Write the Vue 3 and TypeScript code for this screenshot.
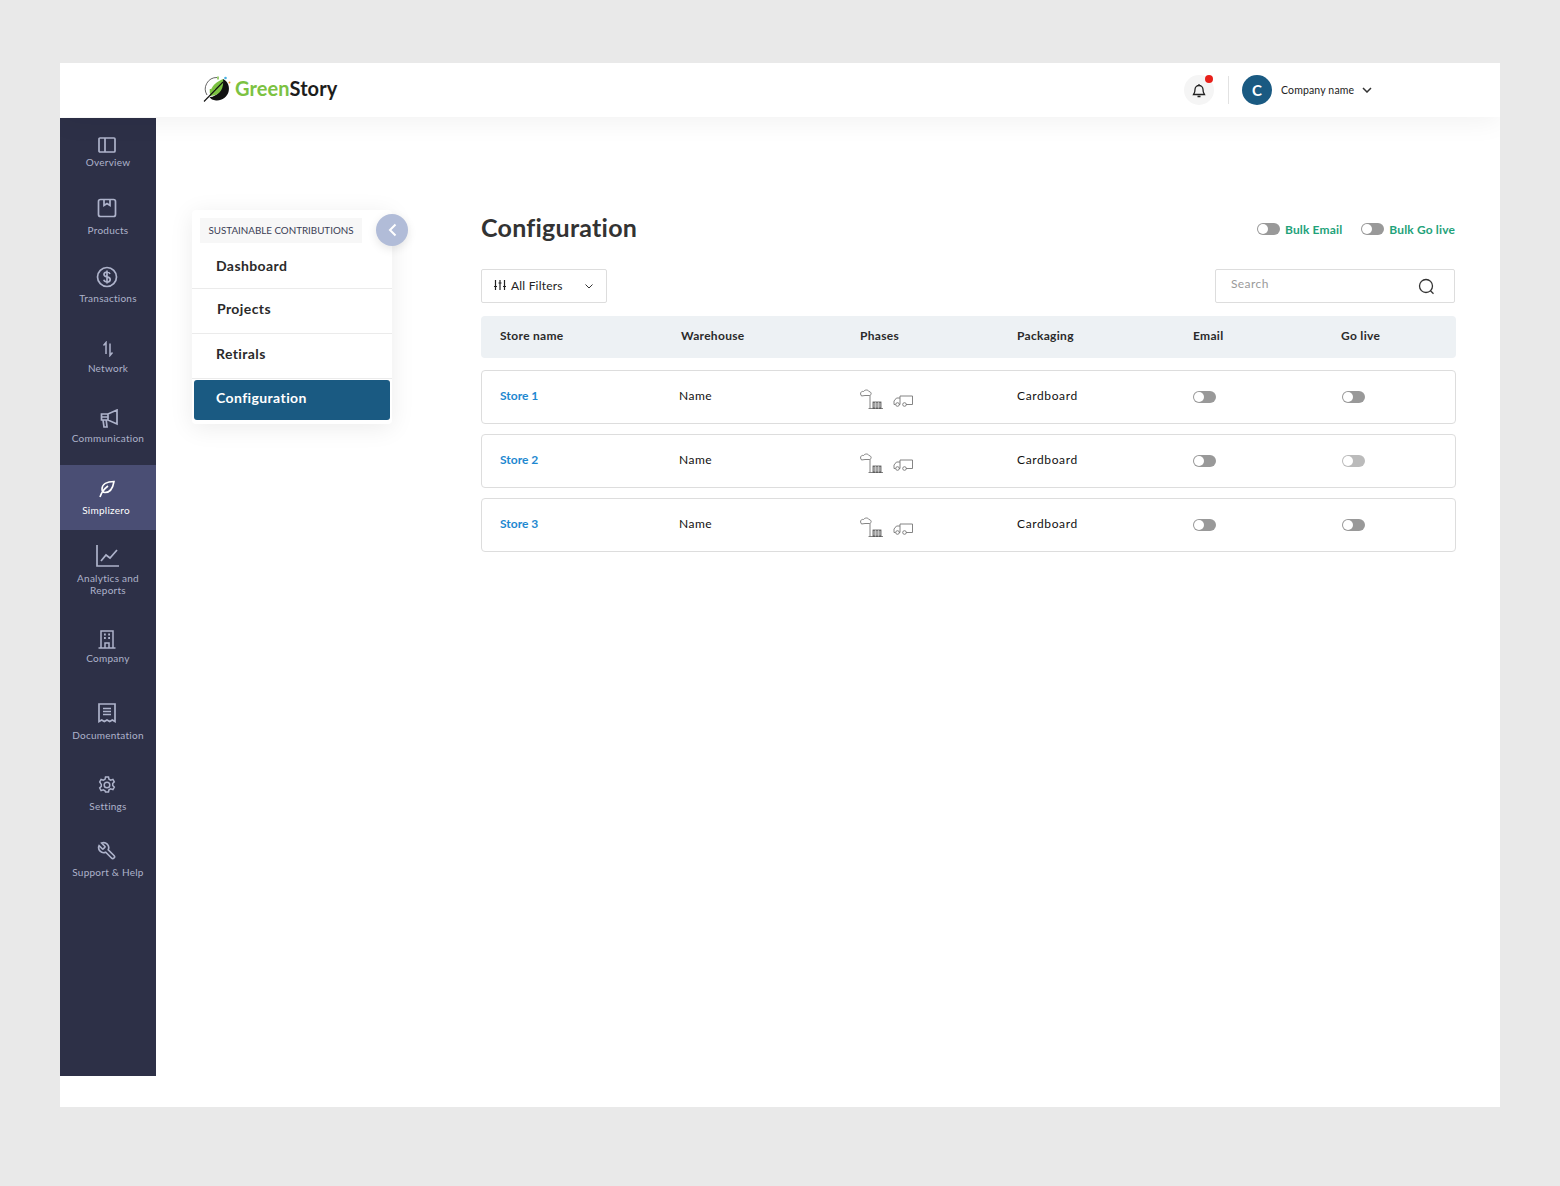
<script setup lang="ts">
interface NavItem { key: string; label: string[]; h: number; pt: number; gap: number; active?: boolean }
const nav: NavItem[] = [
  { key: 'overview', label: ['Overview'], h: 68, pt: 15, gap: 0 },
  { key: 'products', label: ['Products'], h: 68, pt: 10, gap: 4 },
  { key: 'transactions', label: ['Transactions'], h: 71, pt: 11, gap: 3 },
  { key: 'network', label: ['Network'], h: 71, pt: 12, gap: 1 },
  { key: 'communication', label: ['Communication'], h: 69, pt: 10, gap: 2 },
  { key: 'simplizero', label: ['Simplizero'], h: 65, pt: 12, gap: 3, active: true },
  { key: 'analytics', label: ['Analytics and', 'Reports'], h: 86, pt: 14, gap: 4 },
  { key: 'company', label: ['Company'], h: 74, pt: 11, gap: 1 },
  { key: 'documentation', label: ['Documentation'], h: 72, pt: 11, gap: 4 },
  { key: 'settings', label: ['Settings'], h: 67, pt: 11, gap: 3 },
  { key: 'support', label: ['Support & Help'], h: 60, pt: 10, gap: 3 },
]
const menu = ['Dashboard', 'Projects', 'Retirals']
const stores = [
  { name: 'Store 1', live: true },
  { name: 'Store 2', live: false },
  { name: 'Store 3', live: true },
]
</script>

<template>
  <div class="frame">
    <header class="topbar">
      <div class="brand">
        <svg width="28" height="28" viewBox="0 0 28 28" fill="none">
          <path d="M14 2.500A11.500 11.500 0 0 0 4 20" stroke="#666" stroke-width="1"/>
          <path d="M20 4c5 2 7 8 5.500 13-1.500 5-6.500 9-12.500 8.500-3-.3-5.500-1.500-6.500-3.500C15 22 19 14 20 4z" fill="#111"/>
          <path d="M7 21c-.5-6 3-13 13-17 1 8-2 17-13 17z" fill="#7cc242"/>
          <path d="M1 26.500 20 7" stroke="#111" stroke-width="1.100"/>
          <circle cx="22.500" cy="3" r="1.300" fill="#4ab2e3"/>
          <circle cx="26.500" cy="7.500" r="1" fill="#f29a2e"/>
          <path d="M7.500 14v4M11 11v4M15 1.500v3" stroke="#7cc242" stroke-width="1.500"/>
        </svg>
        <span class="brand-text"><span class="green">Green</span>Story</span>
      </div>
      <div class="account">
        <div class="bell">
          <svg width="14" height="15" viewBox="0 0 14 15" fill="none" stroke="#222" stroke-width="1.300">
            <path d="M3 6.500a4 4 0 0 1 8 0c0 3 .6 3.500 1.500 5h-11c.9-1.500 1.500-2 1.500-5zM5.500 13.500h3M7 1v1.500"/>
          </svg>
          <i class="dot"></i>
        </div>
        <div class="vr"></div>
        <div class="avatar">C</div>
        <span class="company">Company name</span>
        <svg width="10" height="6" viewBox="0 0 10 6" fill="none" stroke="#333" stroke-width="1.500"><path d="M1 1l4 4 4-4"/></svg>
      </div>
    </header>

    <div class="body">
      <nav class="sidebar">
        <a v-for="it in nav" :key="it.key" class="nav-item" :class="{ active: it.active }"
           :style="{ height: it.h + 'px', paddingTop: it.pt + 'px', gap: it.gap + 'px' }">
          <span class="nav-icon">
            <svg v-if="it.key === 'overview'" width="18" height="16" viewBox="0 0 18 16" fill="none" stroke="currentColor" stroke-width="1.700"><rect x="1" y="1" width="16" height="14" rx="1"/><path d="M7 1v14"/></svg>
            <svg v-else-if="it.key === 'products'" width="20" height="20" viewBox="0 0 20 20" fill="none" stroke="currentColor" stroke-width="1.700"><rect x="1.500" y="1.500" width="17" height="17" rx="2"/><path d="M7 1.500v6l3-2 3 2v-6"/></svg>
            <svg v-else-if="it.key === 'transactions'" width="22" height="22" viewBox="0 0 22 22" fill="none" stroke="currentColor" stroke-width="1.700"><circle cx="11" cy="11" r="9.500"/><path d="M14 8c-.5-1.300-1.600-2-3-2-1.800 0-3 1-3 2.400 0 3.300 6.200 1.700 6.200 5 0 1.500-1.300 2.600-3.200 2.600-1.500 0-2.700-.8-3.200-2.200M11 4.500v13"/></svg>
            <svg v-else-if="it.key === 'network'" class="shift-n" width="12" height="16" viewBox="0 0 12 16" fill="none" stroke="currentColor" stroke-width="1.500"><path d="M4 13V1.500L1.500 4.500M8 2.500V14.500l2.500-3"/></svg>
            <svg v-else-if="it.key === 'communication'" class="shift" width="18" height="19" viewBox="0 0 18 19" fill="none" stroke="currentColor" stroke-width="1.700"><path d="M17 1v14L8 11H1.500V5H8zM8 5v6M3 11 4 18h3l-.8-7M1.500 8H8"/></svg>
            <svg v-else-if="it.key === 'simplizero'" width="16" height="18" viewBox="0 0 16 18" fill="none" stroke="currentColor" stroke-width="1.600"><path d="M15 1.500C8 1.500 3 4 3 9c0 2 1 3.500 3 3.500 6 0 8-5 9-11zM1 17c1.500-5 4-8 8-11"/></svg>
            <svg v-else-if="it.key === 'analytics'" width="23" height="22" viewBox="0 0 23 22" fill="none" stroke="currentColor" stroke-width="1.700"><path d="M1 0v21h22M5 16l5-6 4 3 7-8"/></svg>
            <svg v-else-if="it.key === 'company'" width="18" height="19" viewBox="0 0 18 19" fill="none" stroke="currentColor" stroke-width="1.500"><path d="M3 18V1h12v17M0.500 18h17M7 18v-5h4v5"/><path d="M6 4.500h1.800M10.200 4.500H12M6 8h1.800M10.200 8H12" stroke-width="2"/></svg>
            <svg v-else-if="it.key === 'documentation'" width="18" height="20" viewBox="0 0 18 20" fill="none" stroke="currentColor" stroke-width="1.700"><path d="M1 1h16v17.500l-2.700-1.500-2.600 1.500L9 17l-2.700 1.500L3.700 17 1 18.500zM5 5.500h8M5 8.500h8M5 11.500h8"/></svg>
            <svg v-else-if="it.key === 'settings'" width="18" height="18" viewBox="0 0 18 18" fill="none" stroke="currentColor" stroke-width="1.500"><circle cx="9" cy="9" r="2.800"/><path d="M7.500 1h3l.5 2.200 1.700.9 2.200-.7 1.400 2.500-1.600 1.600v2l1.600 1.600-1.400 2.500-2.200-.7-1.700.9-.5 2.200h-3L7 14.800l-1.700-.9-2.200.7L1.700 12l1.600-1.600v-2L1.700 6l1.400-2.500 2.200.7L7 3.300z"/></svg>
            <svg v-else class="mirror" width="20" height="20" viewBox="0 0 24 24" fill="none" stroke="currentColor" stroke-width="2"><path d="M14.700 6.300a1 1 0 0 0 0 1.400l1.600 1.600a1 1 0 0 0 1.400 0l3.770-3.770a6 6 0 0 1-7.940 7.940l-6.910 6.910a2.120 2.120 0 0 1-3-3l6.910-6.910a6 6 0 0 1 7.940-7.940l-3.760 3.760z"/></svg>
          </span>
          <span class="nav-label"><span v-for="l in it.label" :key="l">{{ l }}</span></span>
        </a>
      </nav>

      <main class="main">
        <aside class="side">
          <div class="side-card">
            <div class="side-tag">SUSTAINABLE CONTRIBUTIONS</div>
            <a v-for="m in menu" :key="m" class="side-link">{{ m }}</a>
            <a class="side-link current">Configuration</a>
          </div>
          <button class="collapse" aria-label="Collapse">
            <svg width="9" height="14" viewBox="0 0 9 14" fill="none" stroke="#fff" stroke-width="2"><path d="M7.500 1.500 2 7l5.500 5.500"/></svg>
          </button>
        </aside>

        <section class="content">
          <div class="title-row">
            <h1>Configuration</h1>
            <div class="bulk">
              <span class="bulk-item"><i class="toggle"></i>Bulk Email</span>
              <span class="bulk-item"><i class="toggle"></i>Bulk Go live</span>
            </div>
          </div>

          <div class="tools">
            <button class="filter">
              <svg width="12" height="12" viewBox="0 0 12 12" fill="none" stroke="#222" stroke-width="1.200"><path d="M1.500 1v10M6 1v10M10.500 1v10M0 7.500h3M4.500 4H7.500M9 7.500h3"/></svg>
              <span>All Filters</span>
              <svg class="caret" width="8" height="5" viewBox="0 0 8 5" fill="none" stroke="#333"><path d="M.500.500 4 4 7.500.500"/></svg>
            </button>
            <div class="search">
              <span class="search-hint">Search</span>
              <svg width="17" height="17" viewBox="0 0 17 17" fill="none" stroke="#333" stroke-width="1.300"><circle cx="8" cy="8" r="6.500"/><path d="m12.500 12.800 3 3"/></svg>
            </div>
          </div>

          <div class="thead">
            <span>Store name</span><span>Warehouse</span><span>Phases</span><span>Packaging</span><span>Email</span><span>Go live</span>
          </div>

          <div v-for="s in stores" :key="s.name" class="trow">
            <a class="store cell">{{ s.name }}</a>
            <span class="cell">Name</span>
            <span class="phases">
              <svg width="23" height="20" viewBox="0 0 23 20" fill="none" stroke="#666" stroke-width=".8">
                <path d="M.500 5C.500 3 2 2 3.500 2.500 5 .5 8 .5 9 2.500c2.500.3 3 3.500 .5 4H5L1.500 7z"/>
                <path d="M10 6.500v13M8.500 19.500H23"/>
                <rect x="13" y="13" width="8" height="6.500" fill="#8a8a8a" stroke="#555"/>
                <path d="M13 15h8M13 17h8M15.500 13v6.500M18.500 13v6.500" stroke="#ddd" stroke-width=".6"/>
              </svg>
              <svg class="truck" width="20" height="12" viewBox="0 0 20 12" fill="none" stroke="#777" stroke-width=".9">
                <path d="M7 1h12.500v8.500H13M7 1v8.500M7 3H3.500L1 6v3.500h1.500M7 9.500H6"/>
                <circle cx="4.500" cy="9.500" r="1.800"/><circle cx="11.500" cy="9.500" r="1.800"/>
              </svg>
            </span>
            <span class="cell board">Cardboard</span>
            <span class="tg-cell"><i class="toggle"></i></span>
            <span class="tg-cell"><i class="toggle" :class="{ muted: !s.live }"></i></span>
          </div>
        </section>
      </main>
    </div>
  </div>
</template>

<style>
html, body { margin: 0; background: #e9e9e9; }
</style>

<style scoped>
.frame {
  width: 1440px; height: 1044px; margin: 63px 60px 79px; background: #fff;
  font-family: Lato, "Open Sans", sans-serif; color: #111; overflow: hidden;
  display: flex; flex-direction: column;
}
.topbar {
  height: 54px; flex: none; padding: 0 128px 0 143px; display: flex; align-items: center; justify-content: space-between;
  background: #fff; position: relative; z-index: 2; box-shadow: 0 4px 28px rgba(0, 0, 0, .06);
}
.brand { display: flex; align-items: center; gap: 5px; margin-top: -2px; }
.brand-text { font-size: 20px; font-weight: 700; color: #1d1d1b; letter-spacing: .1px; margin-top: -3px; margin-left: -1px; }
.green { color: #7cc242; }
.account { display: flex; align-items: center; font-size: 10.500px; }
.bell { width: 30px; height: 30px; border-radius: 50%; background: #f5f5f5; display: flex; align-items: center; justify-content: center; position: relative; }
.dot { position: absolute; width: 8px; height: 8px; border-radius: 50%; background: #e8201a; top: 0; right: 1px; }
.vr { width: 1px; height: 28px; background: #e2e2e2; margin: 0 13px 0 14px; }
.avatar { width: 30px; height: 30px; border-radius: 50%; background: #1a5a82; color: #fff; font-size: 15px; font-weight: 700; display: flex; align-items: center; justify-content: center; }
.company { margin: 0 8px 0 9px; width: 73px; white-space: nowrap; letter-spacing: .15px; color: #222; }
.body { display: flex; flex: 1; min-height: 0; margin-top: 1px; }
.sidebar { width: 96px; flex: none; height: 958px; background: #2d3047; }
.nav-item { display: flex; flex-direction: column; align-items: center; box-sizing: border-box; color: #aeb3cb; }
.nav-item.active { background: #4a4e74; color: #fff; }
.nav-icon { height: 24px; display: flex; align-items: center; justify-content: center; flex: none; padding-right: 2px; }
.shift { margin-left: 3px; }
.shift-n { margin-left: 2px; }
.mirror { transform: scaleX(-1); }
.nav-label { display: flex; flex-direction: column; align-items: center; font-size: 10px; line-height: 12px; letter-spacing: .25px; white-space: nowrap; }
.nav-item:first-child .nav-label { margin-top: -1px; }
.active .nav-label { padding-right: 4px; }
.main { flex: 1; display: flex; padding: 92px 44px 0 36px; min-width: 0; }
.side { width: 216px; flex: none; position: relative; margin-right: 73px; align-self: flex-start; }
.side-card { width: 200px; box-sizing: border-box; background: #fff; box-shadow: 0 4px 24px rgba(0, 0, 0, .08); border-radius: 4px; padding: 8px 2px 4px; display: flex; flex-direction: column; }
.side-tag { width: 162px; height: 25px; box-sizing: border-box; padding-bottom: 1px; margin-left: 6px; background: #f7f7f7; color: #3a3d55; font-size: 9.800px; line-height: 24px; text-align: center; white-space: nowrap; }
.side-link { height: 45px; box-sizing: border-box; display: flex; align-items: center; font-size: 14px; font-weight: 700; letter-spacing: .4px; border-bottom: 1px solid #ebebeb; color: #2a2a2a; margin: 0 -2px; padding: 0 0 6px 24px; }
.side-link:nth-of-type(1) { height: 46px; padding-bottom: 0; }
.side-link:nth-of-type(2) { padding-left: 25px; }
.side-link.current { height: 40px; margin: 1px 0 0; padding: 0 0 5px 22px; background: #1a5a82; color: #fff; border-radius: 3px; border: 0; }
.collapse { position: absolute; left: 184px; top: 4px; width: 32px; height: 32px; border-radius: 50%; border: 0; background: #b1bcd8; padding: 0; display: flex; align-items: center; justify-content: center; box-shadow: 0 3px 10px rgba(0, 0, 0, .1); }
.content { flex: 1; min-width: 0; }
.title-row { height: 36px; display: flex; align-items: center; justify-content: space-between; }
h1 { margin: -2px 0 0; font-size: 25px; font-weight: 700; color: #333; letter-spacing: .25px; }
.bulk { display: flex; gap: 19px; margin-right: 1px; margin-top: 2px; }
.bulk-item { display: flex; align-items: center; gap: 5px; color: #1fa27a; font-size: 12px; font-weight: 700; letter-spacing: .15px; }
.toggle { display: inline-block; width: 23px; height: 12px; border-radius: 6px; background: #999; position: relative; }
.toggle::before { content: ""; position: absolute; left: 1px; top: 1px; width: 10px; height: 10px; border-radius: 50%; background: #fff; }
.toggle.muted { background: #bbb; }
.tools { display: flex; justify-content: space-between; margin-top: 23px; margin-right: 1px; }
.filter { width: 126px; height: 34px; box-sizing: border-box; display: flex; align-items: center; gap: 5px; padding: 0 13px 2px 12px; border: 1px solid #ddd; border-radius: 2px; background: #fff; font: inherit; font-size: 12px; letter-spacing: .2px; color: #222; }
.caret { margin-left: auto; margin-top: 2px; }
.search { width: 240px; height: 34px; box-sizing: border-box; display: flex; align-items: center; justify-content: space-between; padding: 0 19px 0 15px; border: 1px solid #ddd; border-radius: 2px; font-size: 12px; letter-spacing: .4px; color: #9a9a9a; }
.search-hint { padding-bottom: 6px; }
.thead, .trow { display: grid; align-items: center; font-size: 12px; letter-spacing: .3px; }
.thead { grid-template-columns: 181px 179px 157px 176px 148px 1fr; margin-top: 13px; height: 42px; padding: 0 0 4px 19px; box-sizing: border-box; background: #edf1f4; border-radius: 4px; font-weight: 700; color: #2a2a2a; }
.trow { grid-template-columns: 179px 181px 157px 176px 149px 1fr; height: 54px; box-sizing: border-box; padding-left: 18px; border: 1px solid #ddd; border-radius: 4px; margin-top: 10px; }
.thead + .trow { margin-top: 12px; }
.cell { padding-bottom: 4px; letter-spacing: .5px; }
.board { letter-spacing: .62px; }
.store { color: #1e88d0; font-weight: 700; letter-spacing: 0; }
.phases { display: flex; align-items: flex-end; gap: 10px; padding-top: 3px; }
.truck { margin-bottom: 2px; }
.tg-cell { display: flex; }
</style>
